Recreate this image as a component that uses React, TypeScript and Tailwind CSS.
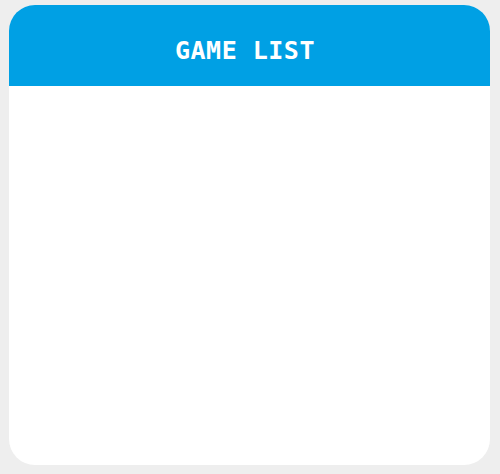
export default function App() {
  return (
    <div className="w-[500px] h-[474px] bg-[#eeeeee] pt-[5px] pl-[9px]">
      <div className="w-[481px] h-[460px] bg-white rounded-[26px] overflow-hidden flex flex-col">
        <div className="h-[81px] bg-[#00a0e4] flex items-center justify-center pr-[9px] pt-[10px]">
          <h1 className="text-white text-[25px] leading-none font-bold tracking-[0.5px] font-['DejaVu_Sans_Mono',monospace]">
            GAME LIST
          </h1>
        </div>
      </div>
    </div>
  );
}
